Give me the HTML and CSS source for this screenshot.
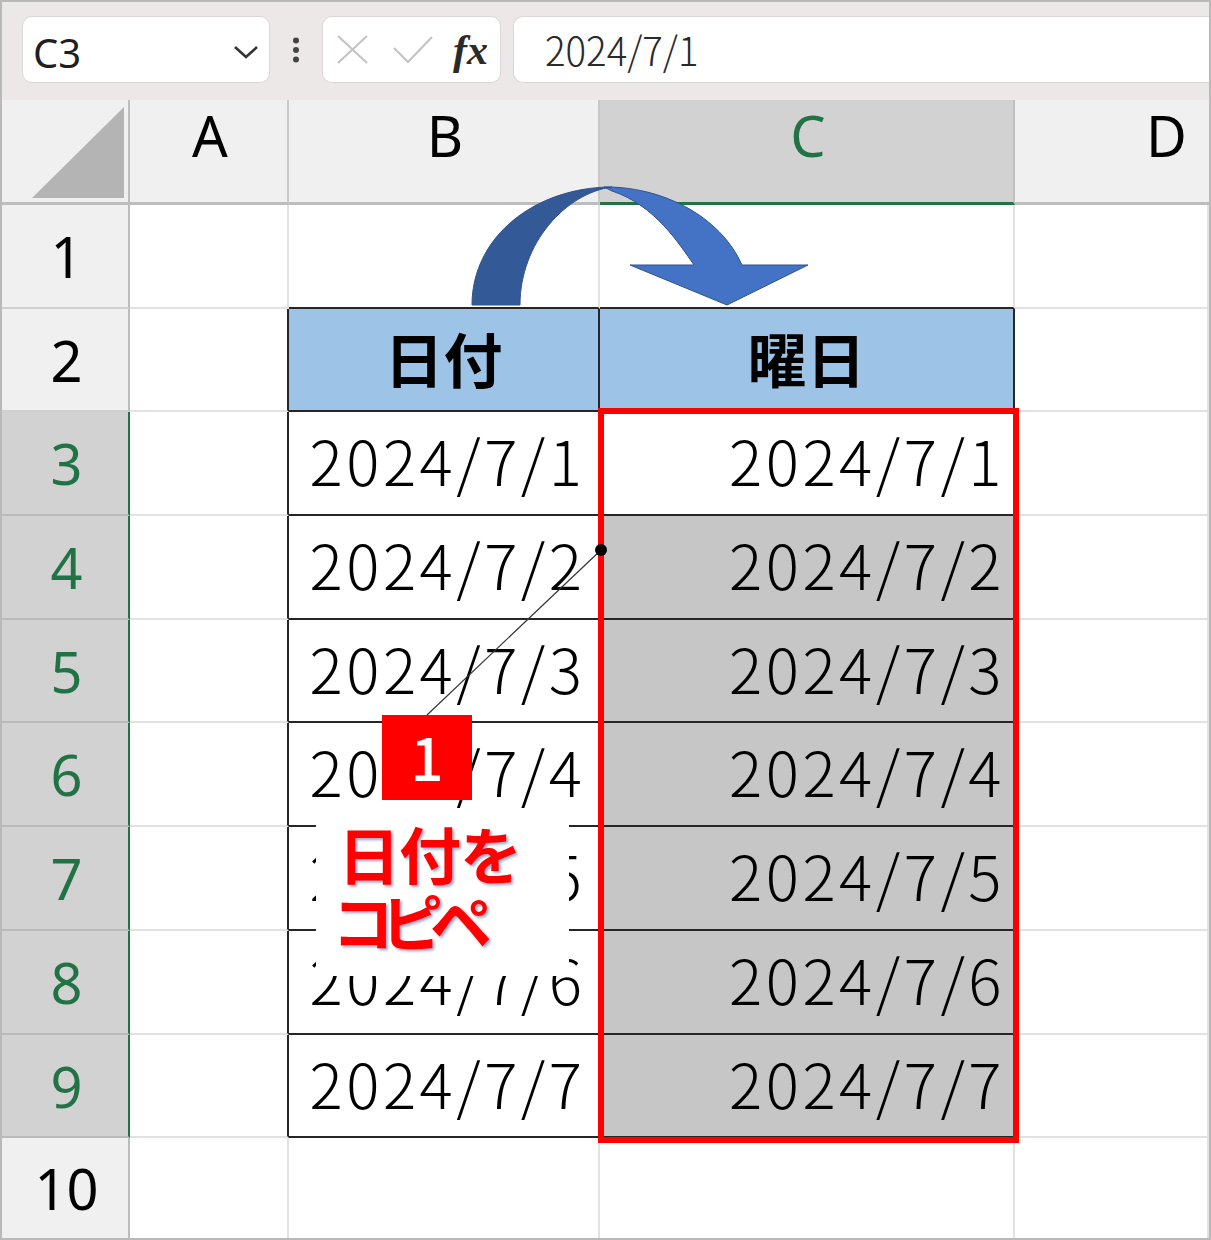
FILE: index.html
```html
<!DOCTYPE html>
<html lang="ja">
<head>
<meta charset="utf-8">
<title>Excel</title>
<link rel="stylesheet" href="styles.css">
</head>
<body>
<div class="sheet">
  <div class="toolbar">
    <div class="namebox">
      <span class="ref">C3</span>
      <svg class="chev" width="26" height="16" viewBox="0 0 26 16"><path d="M2 3 L13 13 L24 3" fill="none" stroke="#333" stroke-width="2.6"/></svg>
    </div>
    <div class="kebab">
      <svg width="8" height="26" viewBox="0 0 8 26"><circle cx="4" cy="3.5" r="3" fill="#444"/><circle cx="4" cy="13" r="3" fill="#444"/><circle cx="4" cy="22.5" r="3" fill="#444"/></svg>
    </div>
    <div class="fxbox">
      <svg class="ico-x" width="31" height="29" viewBox="0 0 31 29"><path d="M1 1 L30 28 M30 1 L1 28" stroke="#c4c4c4" stroke-width="2.2" fill="none"/></svg>
      <svg class="ico-ok" width="40" height="29" viewBox="0 0 40 29"><path d="M1 13 L15 27 L39 2" stroke="#c4c4c4" stroke-width="2.2" fill="none"/></svg>
      <span class="fx">fx</span>
    </div>
    <div class="formula"><span class="ftext">2024/7/1</span></div>
  </div>

  <div class="grid">
    <div class="corner"><svg width="92" height="92" viewBox="0 0 92 92"><path d="M0 91 L92 0 L92 91 Z" fill="#b4b4b4"/></svg></div>
    <div class="ch">A</div>
    <div class="ch">B</div>
    <div class="ch sel">C</div>
    <div class="ch d">D</div>

    <div class="rh">1</div>
    <div class="c"></div>
    <div class="c tt"></div>
    <div class="c tt"></div>
    <div class="c"></div>

    <div class="rh">2</div>
    <div class="c tl"></div>
    <div class="c t head">日付</div>
    <div class="c t head">曜日</div>
    <div class="c"></div>

    <div class="rh s">3</div>
    <div class="c tl"></div>
    <div class="c t dt">2024/7/1</div>
    <div class="c t dt r">2024/7/1</div>
    <div class="c"></div>

    <div class="rh s">4</div>
    <div class="c tl"></div>
    <div class="c t dt">2024/7/2</div>
    <div class="c t dt r g">2024/7/2</div>
    <div class="c"></div>

    <div class="rh s">5</div>
    <div class="c tl"></div>
    <div class="c t dt">2024/7/3</div>
    <div class="c t dt r g">2024/7/3</div>
    <div class="c"></div>

    <div class="rh s">6</div>
    <div class="c tl"></div>
    <div class="c t dt">2024/7/4</div>
    <div class="c t dt r g">2024/7/4</div>
    <div class="c"></div>

    <div class="rh s">7</div>
    <div class="c tl"></div>
    <div class="c t dt">2024/7/5</div>
    <div class="c t dt r g">2024/7/5</div>
    <div class="c"></div>

    <div class="rh s">8</div>
    <div class="c tl"></div>
    <div class="c t dt">2024/7/6</div>
    <div class="c t dt r g">2024/7/6</div>
    <div class="c"></div>

    <div class="rh s">9</div>
    <div class="c tl"></div>
    <div class="c t dt">2024/7/7</div>
    <div class="c t dt r g">2024/7/7</div>
    <div class="c"></div>

    <div class="rh last">10</div>
    <div class="c last"></div>
    <div class="c last"></div>
    <div class="c last"></div>
    <div class="c last"></div>
  </div>

  <div class="overlay">
    <div class="selbox"></div>
    <svg class="draw" width="1211" height="1240" viewBox="0 0 1211 1240">
      <path d="M604 187 C660 186 720 215 742 265 L808 265 L727 305 L630 265 L694 265 C680 245 655 205 612 191 Z" fill="#4472c4" stroke="#2f528f" stroke-width="1"/>
      <path d="M472 305 C472 236 536 187 612 187 C566 193 520 243 520 305 Z" fill="#335a97" stroke="#2f528f" stroke-width="1"/>
      <line x1="601" y1="550" x2="427" y2="715" stroke="#333" stroke-width="1.2"/>
      <circle cx="601" cy="550" r="6" fill="#000"/>
    </svg>
    <div class="badge">1</div>
    <div class="note"><span class="l1">日付を</span><br><span class="l2">コピペ</span></div>
  </div>
</div>
</body>
</html>
```

FILE: styles.css
```css
html, body {
  margin: 0;
  padding: 0;
  background: #fff;
}

.sheet {
  position: relative;
  width: 1211px;
  height: 1240px;
  box-sizing: border-box;
  border: 2px solid #b9b9b9;
  overflow: hidden;
  font-family: "Noto Sans", "Open Sans", sans-serif;
}

/* toolbar */
.toolbar {
  height: 98px;
  box-sizing: border-box;
  background: #ece8e8;
  display: flex;
  align-items: flex-start;
  padding: 14px 0 0 20px;
}

.namebox {
  width: 248px;
  height: 67px;
  box-sizing: border-box;
  background: #fff;
  border: 1px solid #dcd7d7;
  border-radius: 10px;
  display: flex;
  align-items: center;
  padding-left: 10px;
  position: relative;
}

.ref {
  font-family: "Noto Sans", sans-serif;
  font-size: 40px;
  color: #1f1f1f;
  line-height: 1;
  margin-top: 6px;
}

.chev {
  margin-left: auto;
  margin-right: 10px;
  margin-top: 4px;
}

.kebab {
  width: 52px;
  height: 67px;
  display: flex;
  align-items: center;
  justify-content: center;
}

.fxbox {
  width: 179px;
  height: 67px;
  box-sizing: border-box;
  background: #fff;
  border: 1px solid #dcd7d7;
  border-radius: 10px;
  display: flex;
  align-items: center;
}

.ico-x {
  margin-left: 14px;
}

.ico-ok {
  margin-left: 25px;
}

.fx {
  margin-left: 20px;
  font-family: "Liberation Serif", serif;
  font-style: italic;
  font-weight: 700;
  font-size: 42px;
  color: #2a2a2a;
  line-height: 1;
  letter-spacing: 0;
}

.formula {
  margin-left: 12px;
  flex: 1;
  height: 67px;
  box-sizing: border-box;
  background: #fff;
  border: 1px solid #dcd7d7;
  border-right: none;
  border-radius: 10px 0 0 10px;
  display: flex;
  align-items: center;
  padding-left: 31px;
}

.ftext {
  display: inline-block;
  font-family: "Noto Sans CJK JP", sans-serif;
  font-weight: 300;
  font-size: 40px;
  color: #2a2a2a;
  line-height: 1;
  transform: scaleX(0.96);
  transform-origin: left center;
  margin-top: -2px;
}

/* grid */
.grid {
  display: grid;
  grid-template-columns: 128px 159px 311px 415px 194px;
  grid-template-rows: 105px 104px 103px 104px 104px 103px 104px 104px 104px 103px 100px;
}

.grid > div {
  box-sizing: border-box;
}

.corner {
  background: #f0f0f0;
  border-right: 2px solid #bcbcbc;
  border-bottom: 3px solid #bdbdbd;
  display: flex;
  align-items: flex-end;
  justify-content: flex-end;
  padding: 0 4px 3px 0;
}

.ch {
  background: #f0f0f0;
  border-right: 2px solid #c8c8c8;
  border-bottom: 3px solid #bdbdbd;
  display: flex;
  justify-content: center;
  align-items: flex-start;
  padding-top: 7px;
  padding-left: 3px;
  font-size: 56px;
  line-height: 1;
  color: #000;
}

.ch.sel {
  background: #d2d2d2;
  color: #217346;
  border-bottom: 3px solid #217346;
  border-right-color: #c0c0c0;
}

.ch.d {
  justify-content: flex-start;
  padding-left: 131px;
  border-right: none;
}

.rh {
  background: #f0f0f0;
  border-right: 2px solid #bcbcbc;
  border-bottom: 2px solid #d0d0d0;
  display: flex;
  align-items: center;
  justify-content: center;
  padding-left: 3px;
  font-size: 56px;
  line-height: 1;
  color: #000;
}

.rh.s {
  background: #d2d2d2;
  color: #217346;
  border-right-color: #217346;
  border-bottom-color: #bababa;
}

.rh.last,
.c.last {
  border-bottom: none;
}

.c {
  background: #fff;
  border-right: 2px solid #e2e2e2;
  border-bottom: 2px solid #e2e2e2;
}

.c.tt {
  border-bottom-color: #262626;
}

.c.tl {
  border-right-color: #262626;
}

.c.t {
  border-right-color: #262626;
  border-bottom-color: #262626;
}

.head {
  background: #9dc3e6;
  display: flex;
  align-items: center;
  justify-content: center;
  padding-bottom: 4px;
  font-family: "Noto Sans CJK JP", sans-serif;
  font-weight: 700;
  font-size: 59px;
  line-height: 1;
  color: #000;
}

.dt {
  display: flex;
  align-items: center;
  justify-content: center;
  padding-left: 8px;
  padding-bottom: 8px;
  font-family: "Noto Sans CJK JP", sans-serif;
  font-weight: 300;
  font-size: 62px;
  line-height: 1;
  color: #000;
  letter-spacing: 3.5px;
}

.dt.r {
  justify-content: flex-end;
  padding-right: 8px;
}

.dt.g {
  background: #c6c6c6;
}

/* overlays */
.overlay {
  position: absolute;
  left: -2px;
  top: -2px;
  width: 1211px;
  height: 1240px;
  pointer-events: none;
}

.draw {
  position: absolute;
  left: 0;
  top: 0;
}

.selbox {
  position: absolute;
  left: 598px;
  top: 408px;
  width: 421px;
  height: 735px;
  box-sizing: border-box;
  border: 6px solid #ff0000;
}

.badge {
  position: absolute;
  left: 382px;
  top: 715px;
  width: 90px;
  height: 85px;
  background: #ff0000;
  color: #fff;
  display: flex;
  align-items: center;
  justify-content: center;
  padding-bottom: 4px;
  box-sizing: border-box;
  font-family: "Noto Sans CJK JP", sans-serif;
  font-weight: 500;
  font-size: 58px;
  line-height: 1;
}

.note {
  position: absolute;
  left: 316px;
  top: 808px;
  width: 253px;
  height: 168px;
  box-sizing: border-box;
  background: #fff;
  padding: 12px 0 0 22px;
  font-family: "Noto Sans CJK JP", sans-serif;
  font-weight: 700;
  font-size: 62px;
  line-height: 67px;
  color: #ff0000;
  text-shadow: 2px 2px 3px rgba(70, 90, 150, 0.55);
}

.l1 {
  letter-spacing: -1px;
}

.l2 {
  display: inline-block;
  margin-left: -6px;
  letter-spacing: -13px;
}
```
